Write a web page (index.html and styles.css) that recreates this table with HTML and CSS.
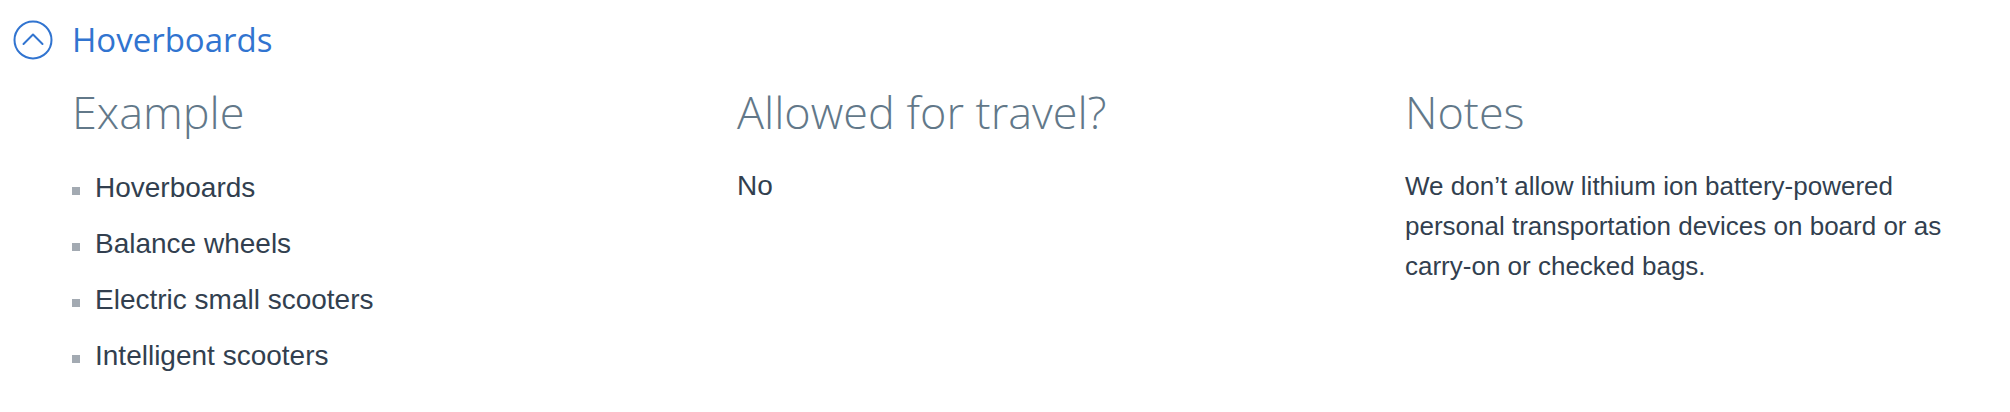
FILE: index.html
```html
<!DOCTYPE html>
<html lang="en">
<head>
<meta charset="utf-8">
<title>Hoverboards</title>
<link rel="stylesheet" href="styles.css">
</head>
<body>
<section class="accordion">
  <button class="acc-toggle" type="button">
    <svg class="acc-icon" width="40" height="40" viewBox="0 0 40 40" aria-hidden="true">
      <circle cx="20" cy="20" r="18.5" fill="none" stroke="#3174d0" stroke-width="2"/>
      <polyline points="10.5,24 20,14.5 29.5,24" fill="none" stroke="#3174d0" stroke-width="2" stroke-linecap="round" stroke-linejoin="round"/>
    </svg>
    <span class="acc-title">Hoverboards</span>
  </button>
  <div class="acc-body">
    <div class="col">
      <h3 class="col-head">Example</h3>
      <ul class="items">
        <li>Hoverboards</li>
        <li>Balance wheels</li>
        <li>Electric small scooters</li>
        <li>Intelligent scooters</li>
      </ul>
    </div>
    <div class="col">
      <h3 class="col-head">Allowed for travel?</h3>
      <p class="text">No</p>
    </div>
    <div class="col">
      <h3 class="col-head">Notes</h3>
      <p class="text notes">We don’t allow lithium ion battery-powered personal transportation devices on board or as carry-on or checked bags.</p>
    </div>
  </div>
</section>
</body>
</html>
```
FILE: styles.css
```css
html, body {
  margin: 0;
  padding: 0;
  background: #ffffff;
}
body {
  font-family: "Liberation Sans", Arial, sans-serif;
  color: #323f4f;
}
.accordion {
  padding-top: 20px;
}
.acc-toggle {
  display: flex;
  align-items: center;
  gap: 19px;
  margin: 0;
  padding: 0 0 0 13px;
  border: 0;
  background: none;
  cursor: pointer;
  font: inherit;
}
.acc-icon {
  display: block;
  flex: none;
}
.acc-title {
  font-family: "Open Sans", sans-serif;
  font-size: 33px;
  font-weight: 400;
  color: #3174d0;
  line-height: 40px;
}
.acc-body {
  display: grid;
  grid-template-columns: 665px 668px 1fr;
  padding-left: 72px;
  padding-top: 24px;
}
.col-head {
  margin: 0;
  font-family: "Open Sans", sans-serif;
  font-weight: 300;
  font-size: 45px;
  line-height: 56px;
  color: #627889;
}
.items {
  list-style: none;
  margin: 28px 0 0;
  padding: 0;
}
.items li {
  position: relative;
  padding-left: 23px;
  font-size: 28px;
  line-height: 40px;
  margin-bottom: 16px;
}
.items li::before {
  content: "";
  position: absolute;
  left: 0;
  top: 19px;
  width: 8px;
  height: 8px;
  background: #a3aab2;
}
.text {
  margin: 26px 0 0;
  font-size: 28px;
  line-height: 40px;
}
.notes {
  font-size: 26px;
  max-width: 560px;
}
```
